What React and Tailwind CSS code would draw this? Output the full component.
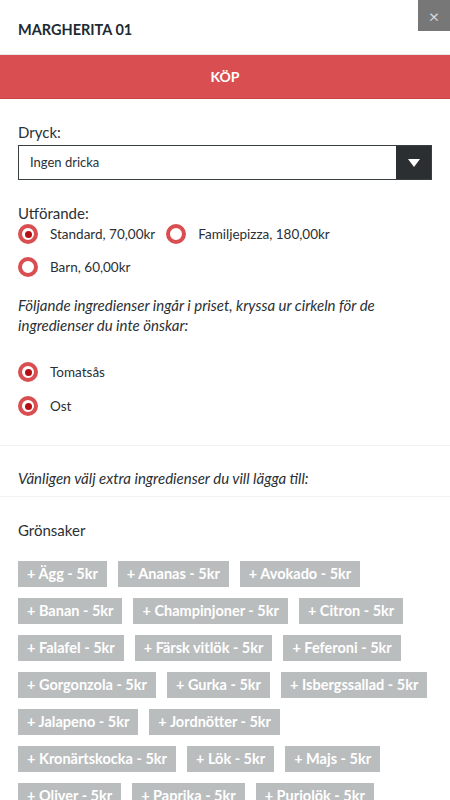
const extras = [
  "Ägg", "Ananas", "Avokado", "Banan", "Champinjoner", "Citron", "Falafel", "Färsk vitlök",
  "Feferoni", "Gorgonzola", "Gurka", "Isbergssallad", "Jalapeno", "Jordnötter", "Kronärtskocka",
  "Lök", "Majs", "Oliver", "Paprika", "Purjolök",
];

function Radio({ checked, label }) {
  return (
    <label className="flex items-center gap-[12px] text-[13.5px] leading-[20px] text-[#2a3035]">
      <span className="w-[20px] h-[20px] rounded-full border-[4px] border-[#d94f51] bg-white flex items-center justify-center">
        {checked && <span className="w-[7px] h-[7px] rounded-full bg-[#b30f14]" />}
      </span>
      {label}
    </label>
  );
}

export default function App() {
  return (
    <div className="w-[450px] h-[800px] overflow-hidden bg-white text-[#2a3035]" style={{ fontFamily: "Lato, 'Open Sans', sans-serif" }}>
      <div className="relative h-[55px] border-b border-[#e8e8e8] flex items-center px-[18px]">
        <h1 className="text-[14.5px] font-bold text-[#1e2a33] mt-[5px]">MARGHERITA 01</h1>
        <button className="absolute right-0 top-0 w-[32px] h-[31px] bg-[#777777] text-[#d8d8d8] text-[18px] leading-none flex items-center justify-center">×</button>
      </div>
      <button className="w-full h-[44px] bg-[#d94f51] text-white font-bold text-[14px] border-b border-[#c94446]">KÖP</button>

      <div className="px-[18px] pt-[23px]">
        <div className="text-[15px] leading-[20px] mb-[3px]">Dryck:</div>
        <div className="flex h-[35px] border border-[#3a3f42]">
          <div className="flex-1 flex items-center px-[11px] text-[13px]">Ingen dricka</div>
          <div className="w-[35px] bg-[#2b2f31] flex items-center justify-center">
            <svg width="12" height="8" viewBox="0 0 12 8"><path d="M0 0h12L6 8z" fill="#fff" /></svg>
          </div>
        </div>

        <div className="text-[15px] leading-[20px] mt-[23px] mb-[1px]">Utförande:</div>
        <div className="flex flex-wrap gap-x-[11px] gap-y-[13px]">
          <Radio checked label="Standard, 70,00kr" />
          <Radio label="Familjepizza, 180,00kr" />
          <Radio label="Barn, 60,00kr" />
        </div>

        <p className="italic text-[15px] leading-[20px] mt-[18px]">
          Följande ingredienser ingår i priset, kryssa ur cirkeln för de ingredienser du inte önskar:
        </p>
        <div className="flex flex-col gap-[14px] mt-[27px] mb-[29px]">
          <Radio checked label="Tomatsås" />
          <Radio checked label="Ost" />
        </div>
      </div>

      <div className="border-t border-b border-[#f2f2f2] px-[18px] pt-[22px] pb-[8px]">
        <p className="italic text-[15px] leading-[20px]">Vänligen välj extra ingredienser du vill lägga till:</p>
      </div>

      <div className="px-[18px] pt-[23px]">
        <div className="text-[15px] leading-[20px] mb-[21px]">Grönsaker</div>
        <div className="flex flex-wrap gap-x-[11px] gap-y-[11px]">
          {extras.map((e) => (
            <span key={e} className="h-[26px] px-[9px] bg-[#babdbe] text-white font-bold text-[14.5px] flex items-center">
              + {e} - 5kr
            </span>
          ))}
        </div>
      </div>
    </div>
  );
}
